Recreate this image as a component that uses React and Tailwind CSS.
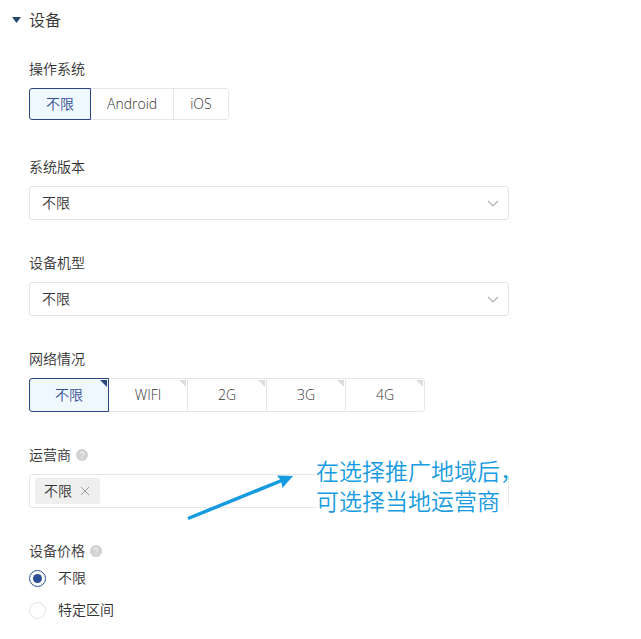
import React, { useState } from 'react'

const osOptions = ['不限', 'Android', 'iOS']
const networkOptions = ['不限', 'WIFI', '2G', '3G', '4G']
const priceOptions = ['不限', '特定区间']

// Grey question mark next to a label
const HelpIcon = () => (
  <svg className="w-3 h-3" viewBox="0 0 12 12" aria-hidden="true">
    <circle cx="6" cy="6" r="6" fill="#d2d2d2" />
    <path d="M4.3 4.8a1.7 1.7 0 1 1 2.5 1.5c-.5.3-.8.5-.8 1" fill="none" stroke="#fff" strokeWidth="1" />
    <circle cx="6" cy="8.9" r="0.65" fill="#fff" />
  </svg>
)

const Label = ({ htmlFor, id, help, children }) => (
  <div className="flex items-center gap-[5px] h-[22px]">
    <label htmlFor={htmlFor} id={id}>{children}</label>
    {help && <HelpIcon />}
  </div>
)

const SelectField = ({ id, label }) => (
  <div className="flex flex-col gap-2">
    <Label htmlFor={id}>{label}</Label>
    <div className="relative">
      <select
        id={id}
        className="appearance-none block w-full h-[34px] px-3 bg-white border border-[#e4e4e4] rounded-[3px] outline-none"
      >
        <option>不限</option>
      </select>
      <svg
        className="absolute right-[10px] top-[14px] w-3 h-2 pointer-events-none"
        viewBox="0 0 12 8"
        aria-hidden="true"
      >
        <path d="M1 1l5 5 5-5" fill="none" stroke="#b0b0b0" strokeWidth="1.200" />
      </svg>
    </div>
  </div>
)

const active = 'relative z-10 border-[#2b4580] bg-[#f0f8ff] text-[#34508f]'
const idle = 'border-[#e6e6e6] bg-white'

const App = () => {
  const [os, setOs] = useState('不限')
  const [network, setNetwork] = useState('不限')
  const [price, setPrice] = useState('不限')
  const [carriers, setCarriers] = useState(['不限'])

  return (
    <div
      className="min-h-screen bg-white px-[29px] pt-2 text-sm font-[350] text-[#333]"
      style={{ fontFamily: '"Open Sans", "Noto Sans CJK SC", sans-serif' }}
    >
      <div className="w-full max-w-[480px]">

        {/* Collapsible header */}
        <button type="button" className="flex items-center gap-2 h-6 -ml-[17px] text-base">
          <svg className="w-[9px] h-[6px]" viewBox="0 0 9 6" aria-hidden="true">
            <path d="M0 0h9L4.500 6z" fill="#26456b" />
          </svg>
          设备
        </button>

        <div className="flex flex-col gap-8 mt-[26px]">

          {/* Operating system */}
          <div className="flex flex-col gap-2 mb-1">
            <Label id="os">操作系统</Label>
            <div className="flex" role="group" aria-labelledby="os">
              {osOptions.map(item => (
                <button
                  key={item}
                  type="button"
                  aria-pressed={os === item}
                  onClick={() => setOs(item)}
                  className={`h-8 px-4 border -ml-px first:ml-0 first:rounded-l-[3px] last:rounded-r-[3px] ${os === item ? active : idle}`}
                >
                  {item}
                </button>
              ))}
            </div>
          </div>

          <SelectField id="version" label="系统版本" />
          <SelectField id="model" label="设备机型" />

          {/* Network, each option has a corner mark */}
          <div className="flex flex-col gap-2">
            <Label id="network">网络情况</Label>
            <div className="flex" role="group" aria-labelledby="network">
              {networkOptions.map(item => (
                <button
                  key={item}
                  type="button"
                  aria-pressed={network === item}
                  onClick={() => setNetwork(item)}
                  className={`relative w-20 h-[34px] border -ml-px first:ml-0 first:rounded-l-[3px] last:rounded-r-[3px] ${network === item ? active : idle}`}
                >
                  {item}
                  <svg className="absolute top-px right-px w-[7px] h-[7px]" viewBox="0 0 7 7" aria-hidden="true">
                    <path d="M0 0h7v7z" fill={network === item ? '#2b4580' : '#dcdcdc'} />
                  </svg>
                </button>
              ))}
            </div>
          </div>

          {/* Carrier */}
          <div className="flex flex-col gap-2">
            <Label htmlFor="carrier" help>运营商</Label>
            <div className="relative">
              <div className="flex items-center gap-1 h-[34px] px-[5px] border border-[#e8e8e8] rounded-[3px]">
                {carriers.map(item => (
                  <span key={item} className="flex items-center gap-2 h-[26px] pl-[9px] pr-[10px] bg-[#efefef] rounded-[2px]">
                    {item}
                    <button
                      type="button"
                      aria-label={`移除${item}`}
                      onClick={() => setCarriers(carriers.filter(c => c !== item))}
                    >
                      <svg className="w-[10px] h-[10px]" viewBox="0 0 10 10" aria-hidden="true">
                        <path d="M1 1l8 8M9 1l-8 8" stroke="#999" strokeWidth="1" />
                      </svg>
                    </button>
                  </span>
                ))}
                <input id="carrier" className="flex-1 min-w-0 outline-none" />
              </div>

              {/* Callout over the field */}
              <svg
                className="absolute left-[157px] top-0 w-[108px] h-12 pointer-events-none"
                viewBox="0 0 108 48"
                aria-hidden="true"
              >
                <path d="M2 44.500L97 6" stroke="#169be0" strokeWidth="3.500" />
                <path d="M107 2L91 1.500L95 6.500L96.500 14z" fill="#169be0" />
              </svg>
              <p className="absolute left-[287px] -top-[18px] w-48 bg-white text-[23px] leading-[30px] whitespace-nowrap text-[#169be0]">
                在选择推广地域后，<br />
                可选择当地运营商
              </p>
            </div>
          </div>

          {/* Device price */}
          <div>
            <Label id="price" help>设备价格</Label>
            <div role="radiogroup" aria-labelledby="price">
              {priceOptions.map(item => (
                <label key={item} className="flex items-center gap-3 h-8">
                  <input
                    type="radio"
                    name="price"
                    checked={price === item}
                    onChange={() => setPrice(item)}
                    className="appearance-none grid place-items-center w-[17px] h-[17px] rounded-full border border-[#e2e2e2] checked:border-[#2b4f94] before:w-[9px] before:h-[9px] before:rounded-full checked:before:bg-[#2b4f94]"
                  />
                  {item}
                </label>
              ))}
            </div>
          </div>
        </div>
      </div>
    </div>
  )
}

export default App
